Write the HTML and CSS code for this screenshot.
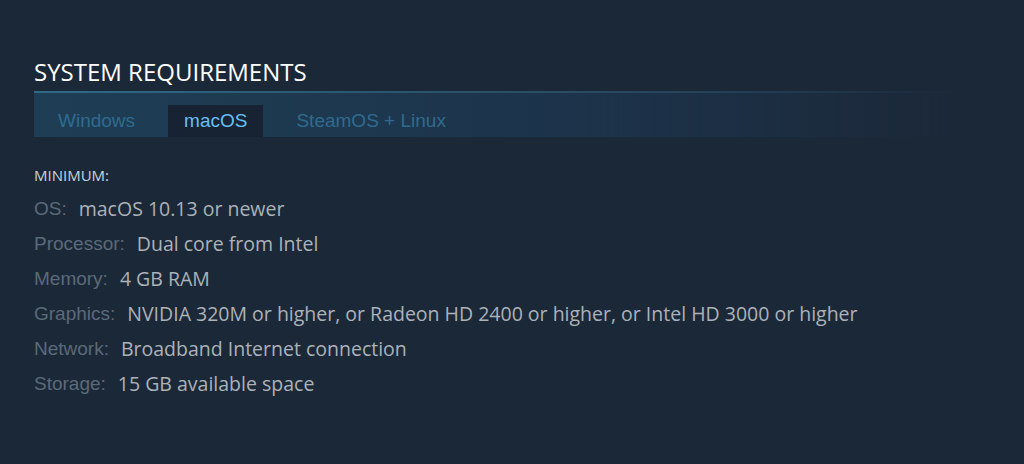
FILE: index.html
```html
<!DOCTYPE html>
<html>
<head>
	<meta charset="utf-8"/>
	<title>System Requirements</title>
	<link rel="stylesheet" href="styles.css">
</head>
<body>
<div class="sysreq">
	<h2 class="title">SYSTEM REQUIREMENTS</h2>
	<div class="tabs">
		<span class="tab">Windows</span>
		<span class="tab active">macOS</span>
		<span class="tab">SteamOS + Linux</span>
	</div>
	<div class="reqs">
		<div class="min">MINIMUM:</div>
		<ul>
			<li><span class="lbl">OS:</span>macOS 10.13 or newer</li>
			<li><span class="lbl">Processor:</span>Dual core from Intel</li>
			<li><span class="lbl">Memory:</span>4 GB RAM</li>
			<li><span class="lbl">Graphics:</span>NVIDIA 320M or higher, or Radeon HD 2400 or higher, or Intel HD 3000 or higher</li>
			<li><span class="lbl">Network:</span>Broadband Internet connection</li>
			<li><span class="lbl">Storage:</span>15 GB available space</li>
		</ul>
	</div>
</div>
</body>
</html>
```
FILE: styles.css
```css
body{
	margin: 0px;
	background-color: #1b2838;
	color: #acb2b8;
	font-family: "Open Sans", "Liberation Sans", sans-serif;
}
.sysreq{
	padding: 55px 34px 0 34px;
}
.title{
	margin: 0;
	font-size: 24px;
	font-weight: normal;
	color: #ffffff;
	line-height: 34px;
}
.tabs{
	margin-top: 2px;
	margin-right: 34px;
	height: 32px;
	padding-top: 12px;
	display: flex;
	border-top: 2px solid transparent;
	border-image: linear-gradient(to right, #2e6a85 0%, #2a4a62 60%, rgba(27,40,56,0) 100%) 1;
	background: linear-gradient(to right, #1e3e55 0%, #1c334a 60%, rgba(27,40,56,0) 100%);
}
.tab{
	font-family: "Liberation Sans", Arial, sans-serif;
	font-size: 19px;
	line-height: 32px;
	padding: 0 16px;
	margin-right: 17px;
	color: #2f6b8e;
}
.tab:first-child{
	padding-left: 24px;
}
.tab.active{
	background-color: #172332;
	color: #66c0f4;
}
.reqs{
	padding-top: 29px;
}
.min{
	font-size: 15px;
	color: #c6d4df;
	line-height: 18px;
	margin-bottom: 7px;
}
ul{
	list-style: none;
	margin: 0;
	padding: 0;
}
li{
	display: flex;
	align-items: center;
	height: 35px;
	font-size: 19.5px;
	color: #acb2b8;
	white-space: nowrap;
}
.lbl{
	font-family: "Liberation Sans", Arial, sans-serif;
	font-size: 19px;
	color: #5b6a78;
	margin-right: 12px;
}
```
